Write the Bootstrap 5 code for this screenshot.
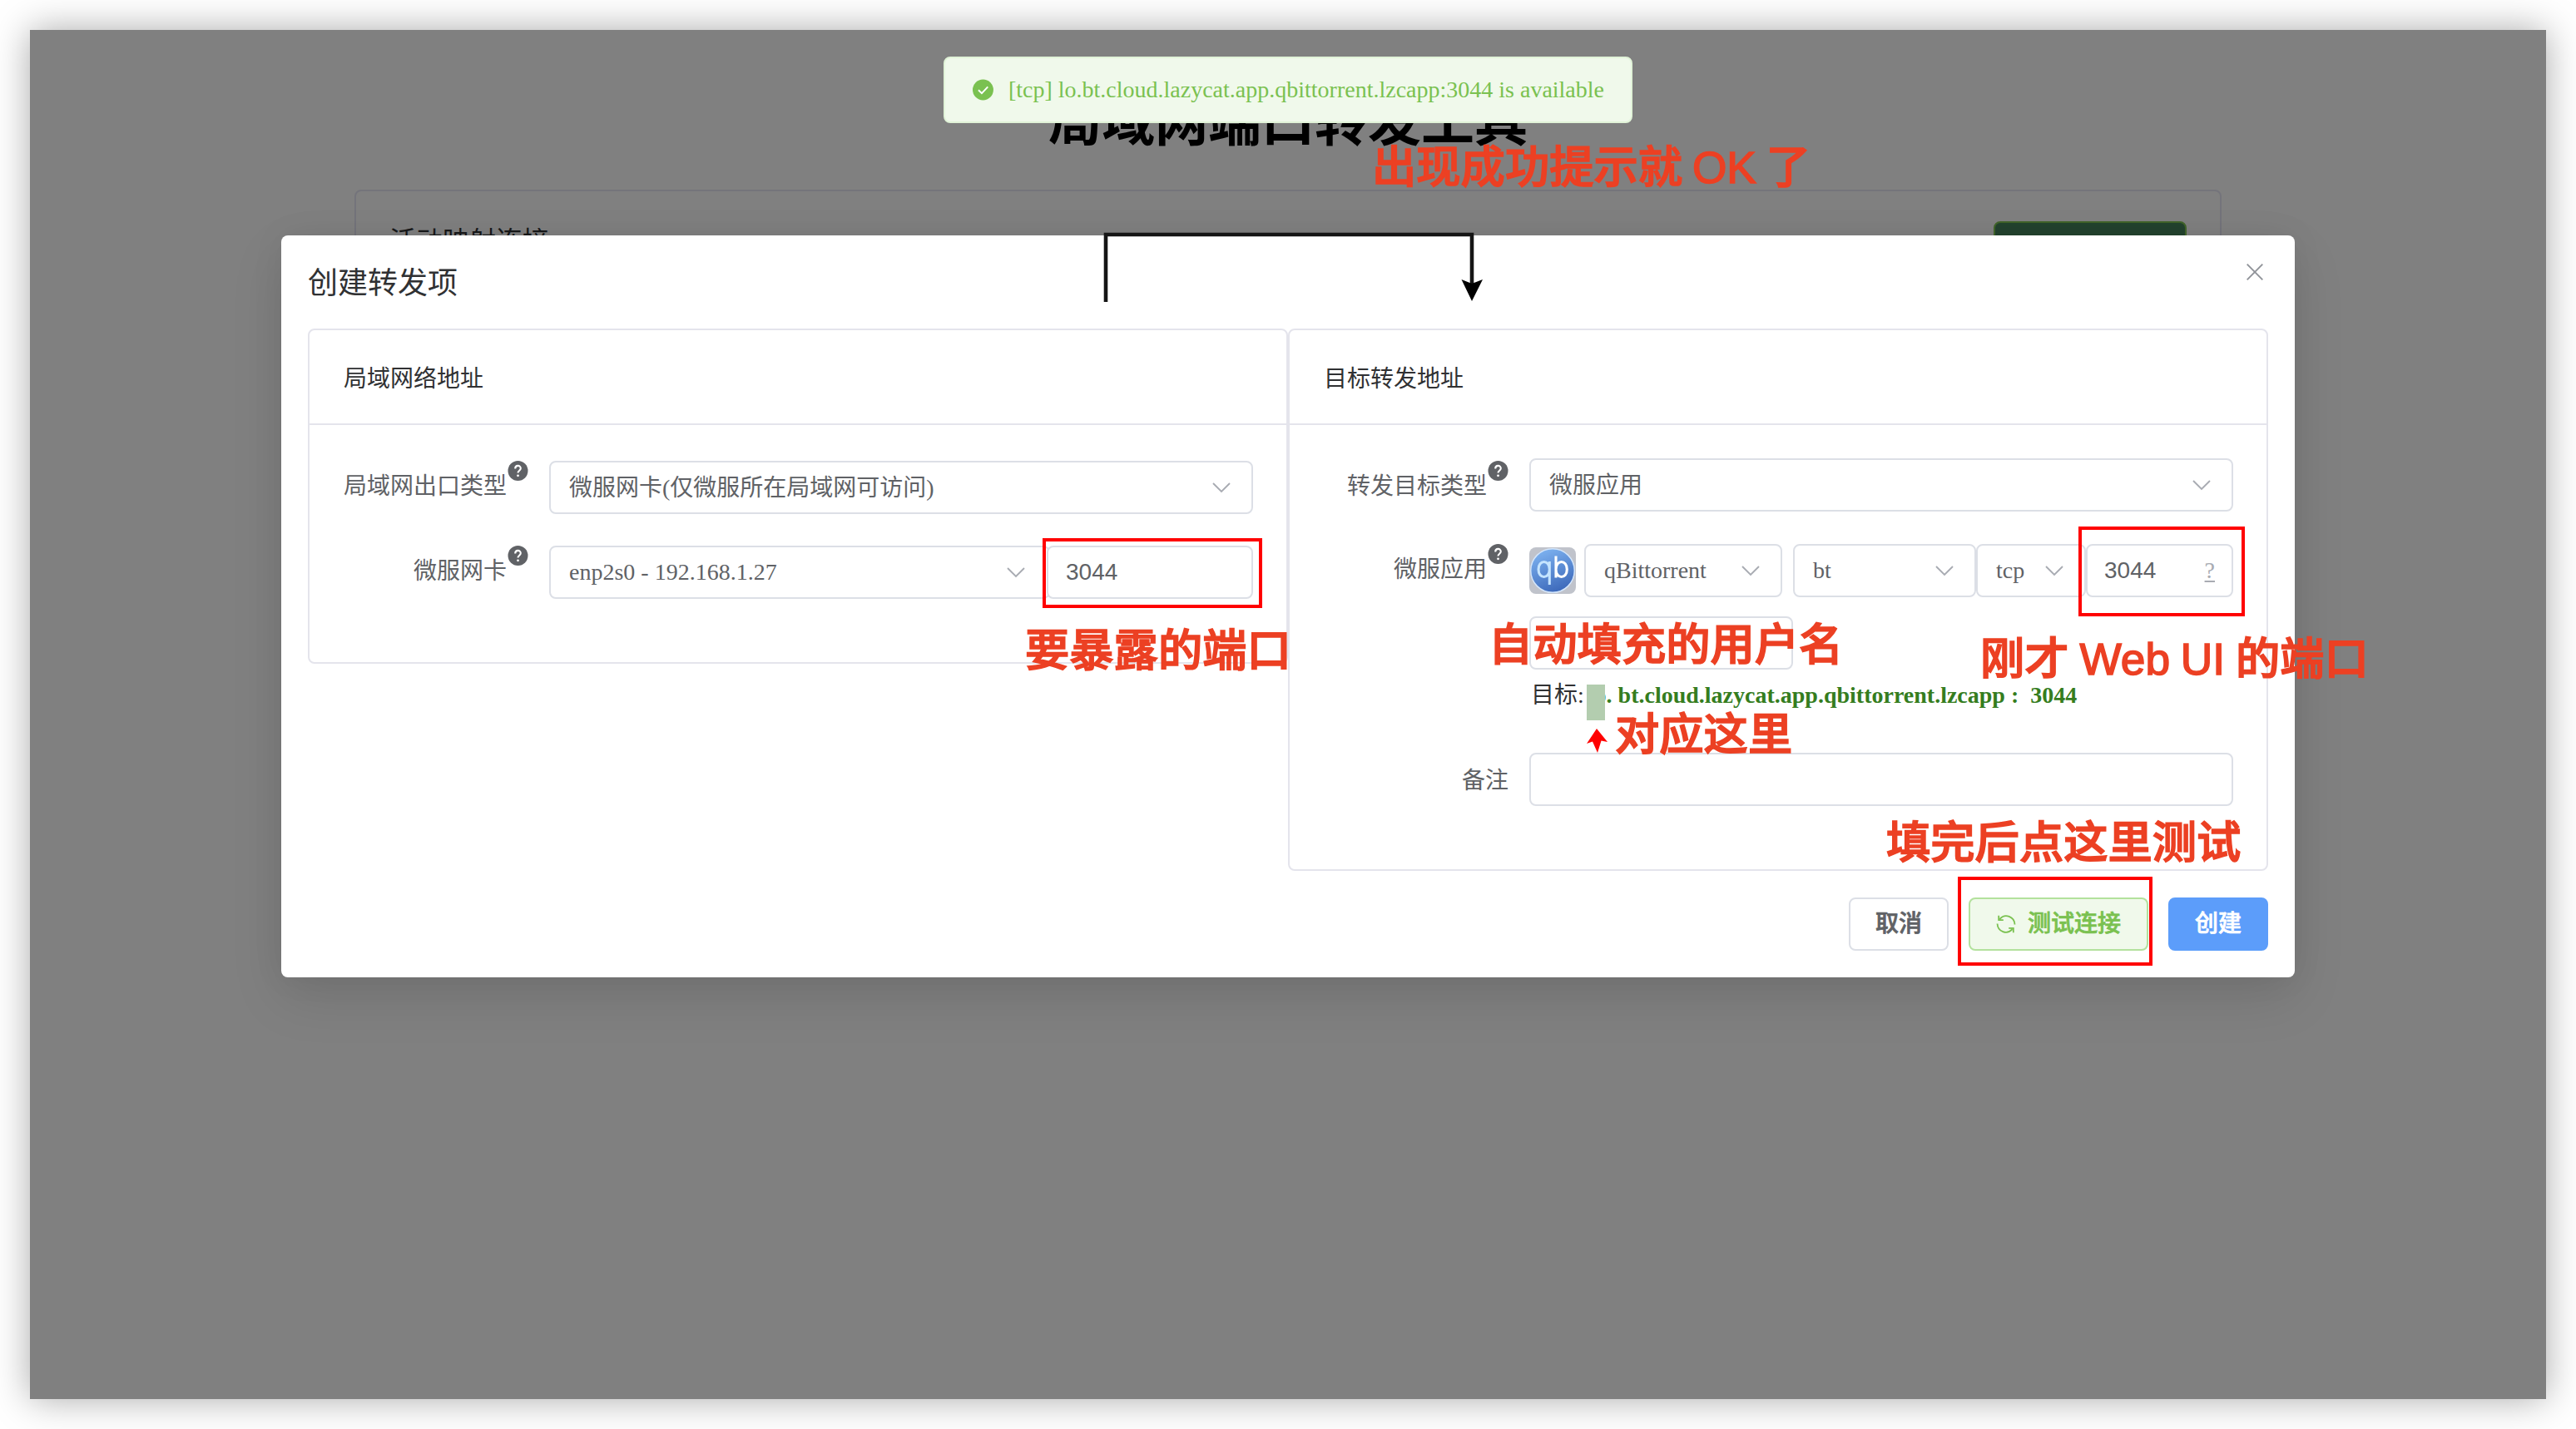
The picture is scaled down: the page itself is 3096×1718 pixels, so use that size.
<!DOCTYPE html>
<html lang="zh-CN">
<head>
  <meta charset="UTF-8">
  <meta name="viewport" content="width=device-width, initial-scale=1.0">
  <title>局域网端口转发工具</title>
  <link rel="stylesheet" href="https://cdn.jsdelivr.net/npm/bootstrap@5.3.3/dist/css/bootstrap.min.css">
  <style>
    body {
      background-color: #fff;
      font-family: "Liberation Serif", "Noto Sans CJK SC", serif;
      font-size: 28px;
      line-height: 42px;
      color: #606266;
      padding: 36px;
      height: 1718px;
      overflow: hidden;
    }
    .app-window {
      width: 3024px;
      height: 1646px;
      background-color: #808080;
      box-shadow: 0 0 42px rgba(0, 0, 0, 0.34);
    }
    /* page behind the dialog */
    .page-title {
      font-size: 64px;
      line-height: 80px;
      font-weight: bold;
      color: #000;
      padding-top: 72px;
      margin-bottom: 40px;
    }
    .page-panel {
      width: 2244px;
      height: 240px;
      border: 2px solid #74747b;
      border-radius: 8px;
      padding: 36px 40px;
      font-size: 32px;
      line-height: 48px;
      color: #18191a;
    }
    .page-btn {
      width: 232px;
      height: 64px;
      border: 2px solid #41652a;
      border-radius: 8px;
      background-color: #23432e;
    }
    /* toast */
    .toast-bar {
      left: 1098px;
      top: 32px;
      width: 828px;
      height: 80px;
      padding: 0 32px 0 33px;
      gap: 18px;
      border: 2px solid #e1f3d8;
      border-radius: 8px;
      background-color: #f0f9eb;
      color: #7ac150;
      z-index: 3;
    }
    /* dialog */
    .dialog-box {
      left: 302px;
      top: 247px;
      width: 2420px;
      height: 892px;
      padding: 32px;
      border-radius: 8px;
      background-color: #fff;
      box-shadow: 0 24px 64px rgba(0, 0, 0, 0.11), 0 0 40px rgba(0, 0, 0, 0.06);
    }
    .dialog-head {
      height: 80px;
      font-size: 36px;
      line-height: 52px;
      color: #303133;
    }
    .dialog-close {
      margin: 2px 6px 0 0;
    }
    .form-panel {
      width: 1178px;
      border: 2px solid #e4e4ec;
      border-radius: 8px;
    }
    .panel-left {
      height: 403px;
    }
    .panel-right {
      height: 652px;
    }
    .panel-head {
      height: 114px;
      padding: 38px 41px 34px;
      border-bottom: 2px solid #e4e4ec;
      color: #303133;
    }
    .panel-left .panel-body {
      padding: 43px 40px;
    }
    .panel-right .panel-body {
      padding: 40px 40px;
    }
    .field-row {
      height: 64px;
    }
    .panel-left .first-row { margin-bottom: 38px; }
    .panel-right .first-row { margin-bottom: 39px; }
    .user-row { margin-top: 23px; }
    .field-name {
      flex: none;
      width: 248px;
      padding-right: 25px;
      line-height: 62px;
      white-space: nowrap;
    }
    .field-name.with-tip {
      gap: 1px;
    }
    .field-name.low {
      padding-top: 3px;
    }
    .field-name svg {
      flex: none;
    }
    .field-box {
      height: 64px;
      padding: 0 22px;
      border: 2px solid #dcdfe6;
      border-radius: 8px;
      background-color: #fff;
    }
    .field-box .zh { padding-top: 2px; }
    .box-nic { width: 602px; margin-right: -4px; }
    .box-nic svg { margin-right: 3px; }
    .box-port { width: 248px; padding-left: 21px; }
    .box-app { width: 238px; margin-left: 10px; }
    .box-sub { width: 220px; margin-left: 13px; }
    .box-proto { width: 132px; }
    .box-target { width: 177px; padding: 0 20px; }
    .box-user { width: 317px; }
    .port-text {
      font-family: "Liberation Sans", sans-serif;
    }
    .port-tip {
      color: #a8abb2;
      text-decoration: underline;
      text-underline-offset: 3px;
    }
    .target-line {
      height: 62px;
      line-height: 62px;
      padding-left: 250px;
      color: #303133;
    }
    .target-host {
      color: #357d1e;
      font-weight: bold;
      margin-left: -2px;
    }
    .memo-row { margin-top: 38px; }
    .mask {
      width: 22px;
      height: 43px;
      left: 1871px;
      top: 787px;
      background-color: #b3cdaf;
    }
    .btn-row {
      gap: 24px;
      margin-top: 32px;
    }
    .btn-row .btn {
      height: 64px;
      padding: 0;
      border-width: 2px;
      border-radius: 8px;
      font-family: "Liberation Sans", "Noto Sans CJK SC", sans-serif;
      font-size: 28px;
      font-weight: 500;
      line-height: 58px;
      -webkit-text-stroke: 0.7px;
    }
    .btn-cancel { width: 120px; border-color: #dcdfe6; color: #606266; }
    .btn-test { width: 216px; gap: 14px; border-color: #b3e19d; background-color: #f0f9eb; color: #7ac150; }
    .btn-create { width: 120px; border-color: #5c9dfa; background-color: #5c9dfa; color: #fff; }
    /* marks drawn over the dialog */
    .note {
      font-family: "Liberation Sans", "Noto Sans CJK SC", sans-serif;
      font-size: 53.3px;
      line-height: 60px;
      font-weight: 500;
      -webkit-text-stroke: 1.6px #ec4023;
      color: #ec4023;
      white-space: nowrap;
      z-index: 4;
    }
    .note-ok { left: 1613px; top: 136px; word-spacing: -3px; }
    .note-expose { left: 1196px; top: 717px; }
    .note-user { left: 1753px; top: 710px; }
    .note-webui { left: 2344px; top: 727px; word-spacing: -2px; }
    .note-here { left: 1905px; top: 818px; }
    .note-test { left: 2231px; top: 948px; }
    .red-frame {
      border: 4px solid #f00;
      z-index: 4;
    }
    .frame-port { left: 1217px; top: 611px; width: 264px; height: 84px; }
    .frame-target { left: 2462px; top: 597px; width: 200px; height: 108px; }
    .frame-test { left: 2317px; top: 1018px; width: 234px; height: 107px; }
    .connector { left: 1284px; top: 239px; z-index: 4; }
    .up-mark { left: 1870px; top: 840px; z-index: 4; }
  </style>
</head>
<body>

<svg class="d-none">
  <symbol id="chevron" viewBox="0 0 24 24">
    <path d="M2 7 L12 17 L22 7" fill="none" stroke="#a8abb2" stroke-width="1.9"/>
  </symbol>
  <symbol id="tip" viewBox="0 0 24 24">
    <circle cx="12" cy="12" r="12" fill="#606266"/>
    <path d="M8.7 9.4 C8.7 4.8 15.3 4.8 15.3 9.1 C15.3 11.6 12 11.8 12 14.6" fill="none" stroke="#fff" stroke-width="2.1"/>
    <circle cx="12" cy="17.8" r="1.4" fill="#fff"/>
  </symbol>
</svg>

<div class="app-window position-relative">
  <h1 class="page-title text-center">局域网端口转发工具</h1>
  <div class="page-panel mx-auto d-flex justify-content-between">
    <span>活动映射连接</span>
    <span class="page-btn"></span>
  </div>

  <div class="toast-bar position-absolute d-flex align-items-center">
    <svg width="28" height="28" viewBox="0 0 28 28">
      <circle cx="14" cy="14" r="14" fill="#7ac150"/>
      <path d="M7.8 14.2 L12.3 18.6 L20.5 10" fill="none" stroke="#fff" stroke-width="2.2"/>
    </svg>
    <span class="text-nowrap">[tcp] lo.bt.cloud.lazycat.app.qbittorrent.lzcapp:3044 is available</span>
  </div>

  <div class="dialog-box position-absolute">
    <div class="dialog-head d-flex justify-content-between align-items-start">
      <span>创建转发项</span>
      <svg class="dialog-close" width="20" height="20" viewBox="0 0 20 20">
        <path d="M0.7 0.7 L19.3 19.3 M19.3 0.7 L0.7 19.3" stroke="#909399" stroke-width="1.9"/>
      </svg>
    </div>

    <div class="d-flex align-items-start">
      <div class="form-panel panel-left">
        <div class="panel-head">局域网络地址</div>
        <div class="panel-body">
          <div class="field-row first-row d-flex">
            <div class="field-name with-tip d-flex justify-content-end">局域网出口类型<svg width="25" height="24"><use href="#tip"/></svg></div>
            <div class="field-box flex-grow-1 d-flex align-items-center justify-content-between">
              <span class="zh">微服网卡(仅微服所在局域网可访问)</span><svg width="28" height="24"><use href="#chevron"/></svg>
            </div>
          </div>
          <div class="field-row d-flex">
            <div class="field-name with-tip d-flex justify-content-end">微服网卡<svg width="25" height="24"><use href="#tip"/></svg></div>
            <div class="field-box box-nic d-flex align-items-center justify-content-between">
              <span>enp2s0 - 192.168.1.27</span><svg width="28" height="24"><use href="#chevron"/></svg>
            </div>
            <div class="field-box box-port port-text d-flex align-items-center">3044</div>
          </div>
        </div>
      </div>

      <div class="form-panel panel-right">
        <div class="panel-head">目标转发地址</div>
        <div class="panel-body">
          <div class="field-row first-row d-flex">
            <div class="field-name with-tip low d-flex justify-content-end">转发目标类型<svg width="25" height="24"><use href="#tip"/></svg></div>
            <div class="field-box flex-grow-1 d-flex align-items-center justify-content-between">
              <span class="zh">微服应用</span><svg width="28" height="24"><use href="#chevron"/></svg>
            </div>
          </div>
          <div class="field-row d-flex align-items-center">
            <div class="field-name with-tip d-flex justify-content-end align-self-start">微服应用<svg width="25" height="24"><use href="#tip"/></svg></div>
            <svg width="56" height="56" viewBox="0 0 56 56">
              <defs>
                <linearGradient id="qbBlue" x1="0.3" y1="0" x2="0.7" y2="1">
                  <stop offset="0" stop-color="#7db2f0"/>
                  <stop offset="1" stop-color="#3a66b8"/>
                </linearGradient>
              </defs>
              <rect width="56" height="56" rx="8" fill="#c0c3cb"/>
              <circle cx="28" cy="28" r="26.3" fill="url(#qbBlue)" stroke="#d4e6fb" stroke-width="1.5"/>
              <g fill="none" stroke-width="3.1">
                <path d="M24.300 17 V45 M24.300 26.500 C24.300 14.500 11 14.500 11 26.500 C11 38.500 24.300 38.500 24.300 26.500" stroke="#c5e4ff"/>
                <path d="M32 10.500 V36.500 M32 26.500 C32 14.500 45.300 14.500 45.300 26.500 C45.300 38.500 32 38.500 32 26.500" stroke="#fff"/>
              </g>
            </svg>
            <div class="field-box box-app d-flex align-items-center justify-content-between">
              <span>qBittorrent</span><svg width="28" height="24"><use href="#chevron"/></svg>
            </div>
            <div class="field-box box-sub d-flex align-items-center justify-content-between">
              <span>bt</span><svg width="28" height="24"><use href="#chevron"/></svg>
            </div>
            <div class="field-box box-proto d-flex align-items-center justify-content-between">
              <span>tcp</span><svg width="28" height="24"><use href="#chevron"/></svg>
            </div>
            <div class="field-box box-target d-flex align-items-center justify-content-between">
              <span class="port-text">3044</span><span class="port-tip">?</span>
            </div>
          </div>
          <div class="field-row user-row d-flex">
            <div class="field-name"></div>
            <div class="field-box box-user"></div>
          </div>
          <div class="target-line text-nowrap">目标: <span class="target-host">lo. bt.cloud.lazycat.app.qbittorrent.lzcapp :&nbsp; 3044</span></div>
          <div class="field-row memo-row d-flex">
            <div class="field-name low text-end">备注</div>
            <div class="field-box flex-grow-1"></div>
          </div>
        </div>
      </div>
    </div>

    <div class="btn-row d-flex justify-content-end">
      <button type="button" class="btn btn-cancel">取消</button>
      <button type="button" class="btn btn-test d-flex align-items-center justify-content-center">
        <svg width="24" height="24" viewBox="0 0 24 24" fill="none" stroke="#7ac150" stroke-width="1.8">
          <path d="M4.5 5.8 C11 -1.5 22 3 22.5 12.5 M3.2 1.8 V7.2 H8.8"/>
          <path d="M19.5 18.2 C13 25.5 2 21 1.5 11.5 M20.8 22.2 V16.8 H15.2"/>
        </svg>
        <span>测试连接</span>
      </button>
      <button type="button" class="btn btn-create">创建</button>
    </div>
  </div>

  <div class="mask position-absolute"></div>

  <div class="note note-ok position-absolute">出现成功提示就 OK 了</div>
  <div class="note note-expose position-absolute">要暴露的端口</div>
  <div class="note note-user position-absolute">自动填充的用户名</div>
  <div class="note note-webui position-absolute">刚才 Web UI 的端口</div>
  <div class="note note-here position-absolute">对应这里</div>
  <div class="note note-test position-absolute">填完后点这里测试</div>

  <div class="red-frame frame-port position-absolute"></div>
  <div class="red-frame frame-target position-absolute"></div>
  <div class="red-frame frame-test position-absolute"></div>

  <svg class="connector position-absolute" width="470" height="96" viewBox="0 0 470 96">
    <path d="M9 88 V7 H449 V72" fill="none" stroke="#151515" stroke-width="4.6"/>
    <path d="M436.500 61 L449 66 L462 61 L449 87 Z" fill="#000"/>
  </svg>
  <svg class="up-mark position-absolute" width="27" height="30" viewBox="0 0 27 30">
    <path d="M13 0 L26 16 L18.500 14.500 L14 29 L8 15.500 L1 18 Z" fill="#f00"/>
  </svg>
</div>

<script src="https://cdn.jsdelivr.net/npm/bootstrap@5.3.3/dist/js/bootstrap.bundle.min.js"></script>
</body>
</html>
